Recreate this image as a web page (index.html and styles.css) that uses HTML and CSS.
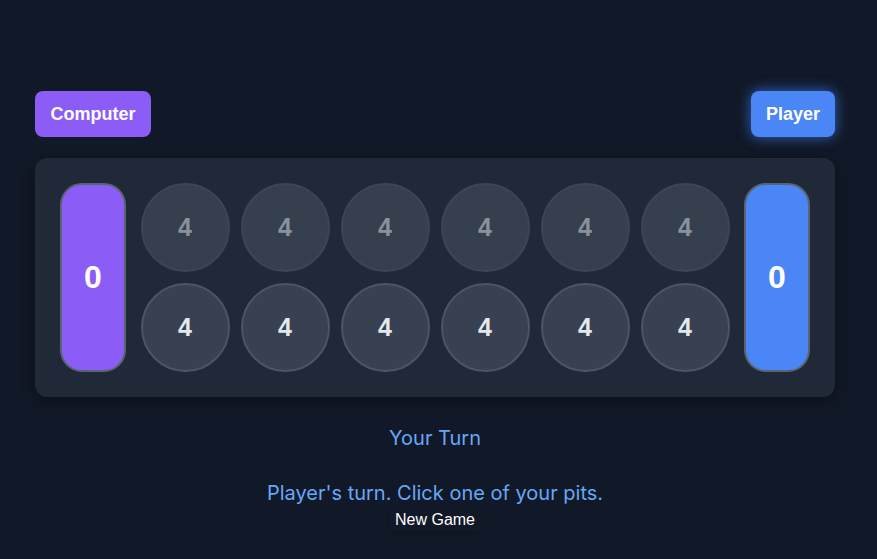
FILE: index.html
```html
<!DOCTYPE html>
<html>
<head>
<meta charset="utf-8">
<link rel="stylesheet" href="styles.css">
</head>
<body>
<div class="game">
  <div class="players">
    <button class="tag tag-computer">Computer</button>
    <button class="tag tag-player">Player</button>
  </div>
  <div class="board">
    <div class="store store-computer">0</div>
    <div class="pits">
      <div class="pit pit-top">4</div>
      <div class="pit pit-top">4</div>
      <div class="pit pit-top">4</div>
      <div class="pit pit-top">4</div>
      <div class="pit pit-top">4</div>
      <div class="pit pit-top">4</div>
      <div class="pit pit-bottom">4</div>
      <div class="pit pit-bottom">4</div>
      <div class="pit pit-bottom">4</div>
      <div class="pit pit-bottom">4</div>
      <div class="pit pit-bottom">4</div>
      <div class="pit pit-bottom">4</div>
    </div>
    <div class="store store-player">0</div>
  </div>
  <div class="turn">Your Turn</div>
  <div class="message">Player's turn. Click one of your pits.</div>
  <button class="new-game">New Game</button>
</div>
</body>
</html>
```
FILE: styles.css
```css
html, body {
  margin: 0;
  padding: 0;
  background: #111827;
  height: 100%;
}
body {
  font-family: Inter, "Liberation Sans", sans-serif;
  color: #e5e7eb;
}
.game {
  width: 800px;
  margin: 0 0 0 35px;
  padding-top: 91px;
  display: flex;
  flex-direction: column;
  align-items: center;
}
.players {
  width: 100%;
  display: flex;
  justify-content: space-between;
  margin-bottom: 21px;
}
.tag {
  height: 46px;
  border: none;
  border-radius: 8px;
  color: #fff;
  font-family: "Liberation Sans", Arial, sans-serif;
  font-weight: 700;
  font-size: 18px;
  padding: 0 15px;
}
.tag-computer {
  background: #8b5cf6;
  width: 116px;
}
.tag-player {
  background: #4a86f6;
  width: 84px;
  box-shadow: 0 0 14px rgba(59, 130, 246, 0.75);
}
.board {
  box-sizing: border-box;
  width: 800px;
  height: 239px;
  background: #1f2937;
  border-radius: 12px;
  padding: 25px;
  display: flex;
  justify-content: space-between;
  align-items: center;
  box-shadow: 0 4px 14px rgba(0, 0, 0, 0.35);
}
.store {
  box-sizing: border-box;
  width: 66px;
  height: 189px;
  border-radius: 22px;
  border: 2px solid #5b6270;
  display: flex;
  align-items: center;
  justify-content: center;
  color: #fff;
  font-family: "Liberation Sans", Arial, sans-serif;
  font-weight: 700;
  font-size: 32px;
}
.store-computer { background: #8b5cf6; }
.store-player { background: #4a86f6; }
.pits {
  display: grid;
  grid-template-columns: repeat(6, 89px);
  grid-template-rows: repeat(2, 89px);
  column-gap: 11px;
  row-gap: 11px;
}
.pit {
  box-sizing: border-box;
  border-radius: 50%;
  display: flex;
  align-items: center;
  justify-content: center;
  font-family: "Liberation Sans", Arial, sans-serif;
  font-weight: 700;
  font-size: 25px;
}
.pit-top {
  background: #363f4e;
  border: 2px solid #3c4554;
  color: #8b919b;
}
.pit-bottom {
  background: #374151;
  border: 2px solid #4b5563;
  color: #e5e7eb;
}
.turn {
  margin-top: 29px;
  font-size: 20px;
  line-height: 24px;
  color: #66a8f8;
}
.message {
  margin-top: 31px;
  font-size: 20px;
  line-height: 24px;
  color: #66a8f8;
}
.new-game {
  margin-top: 4px;
  background: transparent;
  border: none;
  color: #fff;
  font-family: "Liberation Sans", Arial, sans-serif;
  font-size: 16px;
  padding: 2px 6px;
  box-shadow: 0 2px 8px rgba(0, 0, 0, 0.15);
}
```
